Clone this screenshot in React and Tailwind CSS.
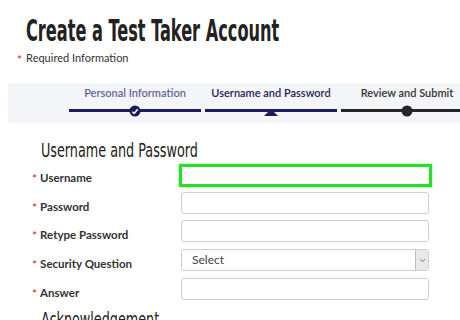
import { ChevronDown } from "lucide-react";

const condensed = { fontFamily: '"DejaVu Sans Condensed", "Liberation Sans", sans-serif' };

const steps = [
    { label: "Personal Information", text: "text-[#67669a]", line: "bg-[#1c1b5c]", marker: "check" },
    { label: "Username and Password", text: "text-[#25245a]", line: "bg-[#1c1b5c]", marker: "tri" },
    { label: "Review and Submit", text: "text-[#333]", line: "bg-[#262626]", marker: "dot" },
];

const fields = [
    { label: "Username", active: true },
    { label: "Password" },
    { label: "Retype Password" },
    { label: "Security Question", select: true },
    { label: "Answer" },
];

function Marker({ type }) {
    if (type === "check") {
        return (
            <div className="absolute left-1/2 top-1/2 -translate-x-1/2 -translate-y-1/2 w-[11px] h-[11px] rounded-full bg-[#1c1b5c] flex items-center justify-center">
                <svg width="7" height="6" viewBox="0 0 7 6">
                    <path d="M0.8 3.2 L2.7 5 L6.2 0.8" stroke="white" strokeWidth="1.5" fill="none" />
                </svg>
            </div>
        );
    }
    if (type === "tri") {
        return (
            <div className="absolute left-1/2 bottom-[1px] -translate-x-1/2 w-0 h-0 border-l-[7px] border-r-[7px] border-b-[7px] border-l-transparent border-r-transparent border-b-[#1c1b5c]" />
        );
    }
    return (
        <div className="absolute left-1/2 top-1/2 -translate-x-1/2 -translate-y-1/2 w-[11px] h-[11px] rounded-full bg-[#262626]" />
    );
}

export default function App() {
    return (
        <div className="w-[460px] h-[320px] overflow-hidden bg-white" style={{ fontFamily: 'Lato, "Open Sans", sans-serif' }}>
            {/* Title */}
            <div className="pl-[26px] pt-[13px] h-[46px]">
                <h1
                    className="inline-block origin-left scale-x-[0.58] text-[31px] leading-[34px] font-bold text-[#222] whitespace-nowrap"
                    style={condensed}
                >
                    Create a Test Taker Account
                </h1>
            </div>
            <div className="pl-[17px] flex items-center gap-[4px] h-[20px] pt-[4px] text-[11px] text-[#333]">
                <span className="text-[#c0282d] text-[12px] leading-none pt-[3px]">*</span>
                <span>Required Information</span>
            </div>

            {/* Steps */}
            <div className="ml-[8px] mt-[17px] h-[40px] bg-[#f4f5f8] pl-[61px] flex gap-[4px] whitespace-nowrap">
                {steps.map((s) => (
                    <div key={s.label} className="w-[132px] shrink-0 flex flex-col items-center">
                        <div className={`pt-[2px] h-[22px] text-[11px] font-semibold ${s.text}`}>{s.label}</div>
                        <div className="relative w-full h-[12px]">
                            <div className={`absolute left-0 right-0 top-[4px] h-[3px] ${s.line}`} />
                            <Marker type={s.marker} />
                        </div>
                    </div>
                ))}
            </div>

            {/* Section */}
            <div className="pl-[41px] pt-[15px] h-[40px]">
                <h2 className="inline-block origin-left scale-x-[0.71] whitespace-nowrap text-[20px] leading-[24px] text-[#222]" style={condensed}>
                    Username and Password
                </h2>
            </div>

            <div className="flex flex-col gap-[6.7px]">
                {fields.map((f) => (
                    <div key={f.label} className="flex items-center h-[22px]">
                        <div className="w-[181px] pl-[32px] flex items-center gap-[3px] pt-[7px] text-[11.5px] font-bold text-[#333]">
                            <span className="text-[#c0282d] font-normal text-[12px] pt-[3px]">*</span>
                            <span>{f.label}</span>
                        </div>
                        {f.active ? (
                            <div className="w-[253px] h-[23px] -ml-[2px] mt-[2px] border-[3px] border-[#28e028] bg-white shadow-[0_0_2px_#6bef6b]" />
                        ) : f.select ? (
                            <div className="w-[248px] h-[22px] border border-[#cfcfcf] rounded-[3px] flex items-center bg-white">
                                <span className="flex-1 pl-[10px] text-[12px] text-[#444]">Select</span>
                                <div className="w-[13px] h-full bg-[#e8e8e8] border-l border-[#bdbdbd] rounded-r-[2px] flex items-center justify-center">
                                    <ChevronDown className="w-[9px] h-[9px] text-[#555]" strokeWidth={2} />
                                </div>
                            </div>
                        ) : (
                            <div className="w-[248px] h-[22px] border border-[#cfcfcf] rounded-[3px] bg-white" />
                        )}
                    </div>
                ))}
            </div>

            <div className="pl-[41px] pt-[7px]">
                <h2 className="inline-block origin-left scale-x-[0.71] whitespace-nowrap text-[20px] leading-[24px] text-[#222]" style={condensed}>
                    Acknowledgement
                </h2>
            </div>
        </div>
    );
}
